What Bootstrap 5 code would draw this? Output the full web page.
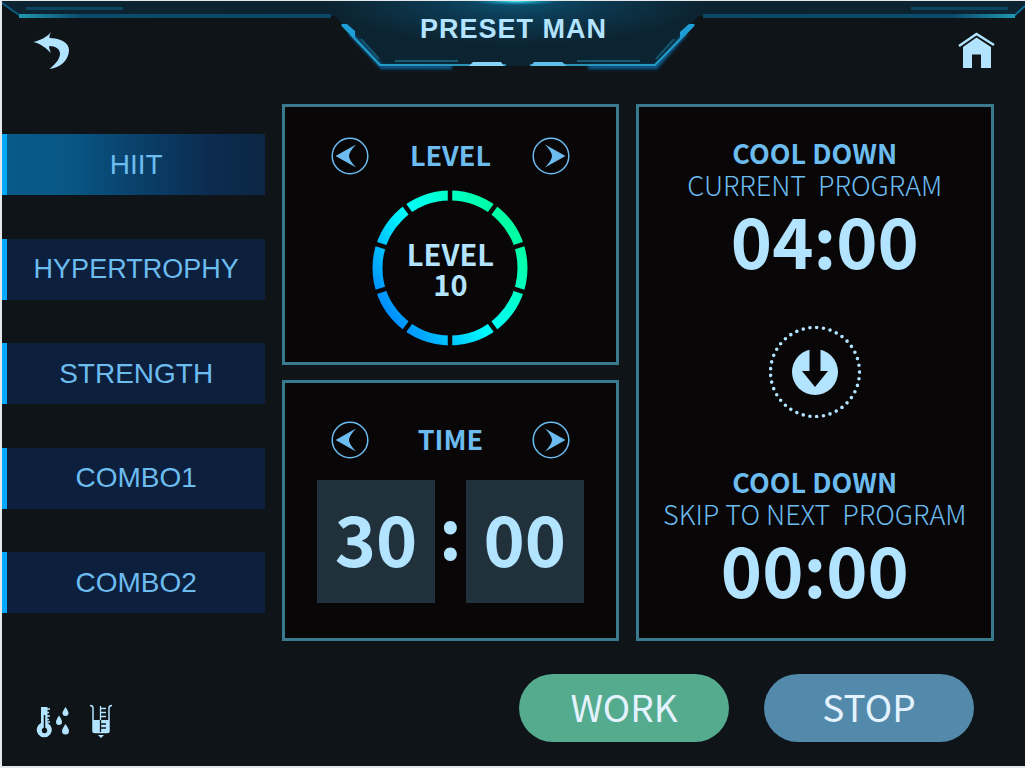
<!DOCTYPE html>
<html lang="en">
<head>
<meta charset="utf-8">
<meta name="viewport" content="width=device-width, initial-scale=1">
<title>Preset Man</title>
<link href="https://cdn.jsdelivr.net/npm/bootstrap@5.3.0/dist/css/bootstrap.min.css" rel="stylesheet">
<style>
  :root { --sky: #6cbcf0; --ice: #b2e3ff; --edge: #38798d; }
  body {
    font-family: "Noto Sans CJK SC", "Noto Sans", sans-serif;
    background: #0f1418; color: var(--sky);
    border: solid #e4e8ea; border-width: 1px 0 2px 2px;
  }
  svg { display: block; }
  .hud-top { height: 103px; }
  .hud-frame { position: absolute; inset: 0 0 auto 0; width: 100%; height: 72px; }
  .screen-title {
    font: bold 27px/32px "Liberation Sans", Arial, sans-serif;
    letter-spacing: 1px; color: var(--ice); margin-top: 12px;
  }
  .icon-btn { color: var(--ice); }
  .board { display: grid; grid-template-columns: 263fr 336fr 358fr; gap: 0 17px; padding-right: 31px; }
  .presets { padding: 30px 0 28px; }
  .preset {
    height: 61px; border: 0; border-left: 5px solid #00a8ff; background: #0c1f3c; color: var(--sky);
    font: 28px/32px "Liberation Sans", Arial, sans-serif;
  }
  .preset-long { font-size: 27px; }
  .preset.active { background: linear-gradient(90deg, #085a8a 0%, #085684 25%, #0a3d66 55%, #0c2b4f 80%, #0b2745 100%); }
  .stack { gap: 15px; }
  .hud-panel { background: #080607; border: 3px solid var(--edge); }
  .panel-level { padding: 30px 46px 16px; min-height: 261px; gap: 15px; }
  .panel-time { padding: 38px 32px 35px; min-height: 261px; gap: 21px; }
  .panel-time .stepper { padding: 0 14px; }
  .stepper .label { padding-bottom: 3px; }
  .panel-cool { padding: 30px 12px 32px; }
  .label { font-size: 27px; line-height: 32px; font-weight: 700; margin: 0; }
  .sublabel { font-size: 27px; line-height: 32px; font-weight: 300; margin: 0; white-space: pre; }
  .clock { font-size: 70px; line-height: 76px; font-weight: 700; color: var(--ice); }
  .clock-current { padding-left: 20px; }
  .ring-box { position: relative; width: 156px; height: 156px; }
  .ring-text { position: absolute; inset: 0; font-size: 29px; line-height: 30px; font-weight: 700; color: var(--ice); }
  .digits { height: 123px; background: #21313c; padding-bottom: 10px; }
  .colon { width: 31px; padding-bottom: 24px; }
  .hud-foot { padding: 33px 51px 24px 34px; }
  .action {
    width: 210px; height: 68px; border: 0; border-radius: 34px; color: #e4f3ff;
    font-size: 37px; line-height: 44px; font-weight: 400; padding: 0 0 5px;
  }
  .action-work { background: #54ab8e; }
  .action-stop { background: #538aac; }
  .actions { gap: 35px; }
</style>
</head>
<body class="min-vh-100 d-flex flex-column">

<header class="hud-top position-relative">
  <svg class="hud-frame" viewBox="0 0 1023 72" preserveAspectRatio="none" aria-hidden="true">
    <defs>
      <radialGradient id="glow" gradientUnits="userSpaceOnUse" cx="0" cy="0" r="1" gradientTransform="translate(513 0) scale(185 44)">
        <stop offset="0" stop-color="#0c5270"/><stop offset=".45" stop-color="#0c3850"/><stop offset="1" stop-color="#0c2431"/>
      </radialGradient>
      <radialGradient id="spark"><stop offset="0" stop-color="#5cf4ff"/><stop offset=".4" stop-color="#1eb0cf" stop-opacity=".7"/><stop offset="1" stop-color="#0c5270" stop-opacity="0"/></radialGradient>
      <linearGradient id="railL"><stop offset="0" stop-color="#2098ae"/><stop offset=".2" stop-color="#0b4c6c"/><stop offset="1" stop-color="#0b4866"/></linearGradient>
      <linearGradient id="railR"><stop offset="0" stop-color="#0b4866"/><stop offset=".8" stop-color="#0b4c6c"/><stop offset="1" stop-color="#2098ae"/></linearGradient>
      <linearGradient id="base"><stop offset="0" stop-color="#1fa0cd"/><stop offset=".5" stop-color="#2f8cae"/><stop offset="1" stop-color="#1fa0cd"/></linearGradient>
      <filter id="soft" filterUnits="userSpaceOnUse" x="300" y="0" width="430" height="80"><feGaussianBlur stdDeviation="1.5"/></filter>
    </defs>
    <path d="M0 0H1023V4L1012 15H696L654 65H376L333 15H17L0 2Z" fill="url(#glow)"/>
    <ellipse cx="514" cy="0" rx="52" ry="5" fill="url(#spark)"/>
    <path d="M0 2L17 14" stroke="#0b5d80" stroke-width="2"/>
    <path d="M1012 15L1023 5" stroke="#0b6e96" stroke-width="2"/>
    <rect x="17" y="13" width="312" height="4" fill="url(#railL)"/>
    <rect x="701" y="13" width="312" height="4" fill="url(#railR)"/>
    <rect x="24" y="6" width="97" height="3" fill="#0b4562"/>
    <rect x="909" y="6" width="97" height="3" fill="#0b4562"/>
    <path d="M348 32L380 66H450M586 66H654L684 32" fill="none" stroke="#0f5f95" stroke-width="4" filter="url(#soft)"/>
    <path d="M340 24L378 64H504M528 64H653L692 24" fill="none" stroke="url(#base)" stroke-width="2"/>
    <path d="M339 23H345L353 30V36L350 35Z" fill="#1d9ed6"/>
    <path d="M693 23H687L678 31V37L682 35Z" fill="#1d9ed6"/>
    <path d="M359 38L377 58M672 38L654 58" stroke="#155570" stroke-width="2"/>
    <path d="M393 60H456M575 60H638" stroke="#185b73" stroke-width="2"/>
    <path d="M467 65L471 61H499L502 65Z" fill="#86d4f7"/>
    <path d="M529 65L532 61H560L565 65Z" fill="#60bfea"/>
  </svg>
  <div class="position-relative d-flex justify-content-between align-items-start ps-4 pe-4">
    <a href="#" class="icon-btn" aria-label="Back">
      <svg width="44" height="70" viewBox="26 1 44 70" fill="currentColor"><path d="M33.500 42C41 40 47 37 51 32Q49 35 49.500 38C59 38 69 42 69 50C69 60 60 68 49.500 69C56 64 60 58 60 54C60 49 56 46 49 46Q49 49 51 53C46 48 41 44 33.500 42Z"/></svg>
    </a>
    <h1 class="screen-title mb-0">PRESET MAN</h1>
    <a href="#" class="icon-btn" aria-label="Home">
      <svg width="44" height="70" viewBox="957 1 44 70" fill="currentColor"><path d="M963 47L976.500 37.500L991 47V68H981V54.500H972V68H963Z"/><path d="M959 46L976.500 34L994 45" fill="none" stroke="currentColor" stroke-width="2.500"/></svg>
    </a>
  </div>
</header>

<main class="board flex-grow-1">
  <nav class="presets d-flex flex-column justify-content-between" aria-label="Programs">
    <button type="button" class="preset active">HIIT</button>
    <button type="button" class="preset preset-long">HYPERTROPHY</button>
    <button type="button" class="preset">STRENGTH</button>
    <button type="button" class="preset">COMBO1</button>
    <button type="button" class="preset">COMBO2</button>
  </nav>

  <div class="stack d-flex flex-column">
    <section class="hud-panel panel-level flex-fill d-flex flex-column">
      <div class="stepper d-flex justify-content-between align-items-center">
        <button type="button" class="btn p-0 border-0" aria-label="Level down"><svg width="38" height="38" viewBox="0 0 38 38"><circle cx="19" cy="19" r="17.800" fill="none" stroke="#6cbcf0" stroke-width="1.500"/><path d="M4.500 19L25 7.500Q18 15 18 19Q18 23 25 30.500Z" fill="#6cbcf0"/></svg></button>
        <h2 class="label">LEVEL</h2>
        <button type="button" class="btn p-0 border-0" aria-label="Level up"><svg width="38" height="38" viewBox="0 0 38 38"><circle cx="19" cy="19" r="17.800" fill="none" stroke="#6cbcf0" stroke-width="1.500"/><path d="M33.500 19L13 7.500Q20 15 20 19Q20 23 13 30.500Z" fill="#6cbcf0"/></svg></button>
      </div>
      <div class="ring-box mx-auto">
        <svg width="156" height="156" viewBox="-78 -78 156 156" aria-hidden="true">
          <defs><linearGradient id="ringFill" gradientUnits="userSpaceOnUse" x1="-56" y1="56" x2="68" y2="-30"><stop offset="0" stop-color="#008cff"/><stop offset=".42" stop-color="#00f0ff"/><stop offset=".52" stop-color="#00fff8"/><stop offset="1" stop-color="#00ffa2"/></linearGradient></defs>
          <circle r="72.500" fill="none" stroke="url(#ringFill)" stroke-width="10"/>
          <path d="M0-80V80M47-64.700L-47 64.700M76-24.700L-76 24.700M76 24.700L-76-24.700M47 64.700L-47-64.700" stroke="#080607" stroke-width="4.500"/>
        </svg>
        <div class="ring-text d-flex flex-column align-items-center justify-content-center"><span>LEVEL</span><span>10</span></div>
      </div>
    </section>

    <section class="hud-panel panel-time flex-fill d-flex flex-column">
      <div class="stepper d-flex justify-content-between align-items-center">
        <button type="button" class="btn p-0 border-0" aria-label="Less time"><svg width="38" height="38" viewBox="0 0 38 38"><circle cx="19" cy="19" r="17.800" fill="none" stroke="#6cbcf0" stroke-width="1.500"/><path d="M4.500 19L25 7.500Q18 15 18 19Q18 23 25 30.500Z" fill="#6cbcf0"/></svg></button>
        <h2 class="label">TIME</h2>
        <button type="button" class="btn p-0 border-0" aria-label="More time"><svg width="38" height="38" viewBox="0 0 38 38"><circle cx="19" cy="19" r="17.800" fill="none" stroke="#6cbcf0" stroke-width="1.500"/><path d="M33.500 19L13 7.500Q20 15 20 19Q20 23 13 30.500Z" fill="#6cbcf0"/></svg></button>
      </div>
      <div class="d-flex align-items-center">
        <div class="digits clock flex-fill d-flex align-items-center justify-content-center">30</div>
        <div class="colon clock text-center">:</div>
        <div class="digits clock flex-fill d-flex align-items-center justify-content-center">00</div>
      </div>
    </section>
  </div>

  <section class="hud-panel panel-cool d-flex flex-column align-items-center justify-content-between">
    <div class="text-center">
      <h2 class="label">COOL DOWN</h2>
      <p class="sublabel">CURRENT  PROGRAM</p>
      <div class="clock clock-current">04:00</div>
    </div>
    <button type="button" class="btn p-0 border-0" aria-label="Skip to next program">
      <svg width="92" height="92" viewBox="-46 -46 92 92"><circle r="44.500" fill="none" stroke="#b2e3ff" stroke-width="3.600" stroke-linecap="round" stroke-dasharray="0 1" pathLength="41"/><circle r="23" fill="#b2e3ff"/><path d="M-5.500-25H5.500V-1H13L0 15L-13-1H-5.500Z" fill="#080607"/></svg>
    </button>
    <div class="text-center">
      <h2 class="label">COOL DOWN</h2>
      <p class="sublabel">SKIP TO NEXT  PROGRAM</p>
      <div class="clock">00:00</div>
    </div>
  </section>
</main>

<footer class="hud-foot d-flex justify-content-between align-items-center">
  <div class="d-flex pt-4">
    <svg class="mt-1" width="80" height="36" viewBox="36 706 80 36" fill="#b2e3ff" role="img" aria-label="Temperature and water level">
      <path d="M41 709H47.500V725A7.500 7.500 0 1 1 41 725Z"/><path d="M47 711H50M47 714.500H49M47 718H50M47 721.500H49M47 724H50" stroke="#b2e3ff" stroke-width="1.300"/>
      <path d="M44.500 717V731" stroke="#0f1418" stroke-width="1.500"/><circle cx="44.500" cy="732.500" r="2.700" fill="#0f1418"/>
      <path d="M65.500 709Q68.500 713.500 68.500 715A3 3 0 0 1 62.500 715Q62.500 713.500 65.500 709ZM59 717.500Q62 722 62 724A3 3 0 0 1 56 724Q56 722 59 717.500ZM65.500 726Q69 731 69 733A3.500 3.500 0 0 1 62 733Q62 731 65.500 726Z"/>
      <path d="M90 707.500Q93 707.500 93 710V733Q93 734.500 95 734.500H107Q109 734.500 109 733V710Q109 707.500 112 707.500" fill="none" stroke="#b2e3ff" stroke-width="1.500"/>
      <path d="M93 722H100V734.500H93ZM100 722H109V734.500H100ZM98 737H104L101 740Z"/>
      <path d="M100.500 708V722M101 710.500H106M101 714.500H106M101 718.500H106" stroke="#b2e3ff" stroke-width="1.300"/>
      <path d="M100.500 722V734M101 726H106M101 730H106" stroke="#0f1418" stroke-width="1.300"/>
    </svg>
  </div>
  <div class="actions d-flex">
    <button type="button" class="action action-work">WORK</button>
    <button type="button" class="action action-stop">STOP</button>
  </div>
</footer>

<script src="https://cdn.jsdelivr.net/npm/bootstrap@5.3.0/dist/js/bootstrap.bundle.min.js"></script>
</body>
</html>
